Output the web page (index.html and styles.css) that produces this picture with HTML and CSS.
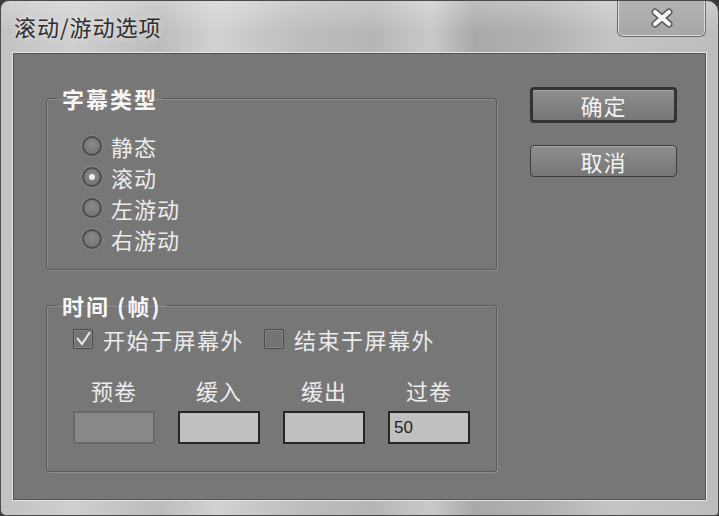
FILE: index.html
```html
<!DOCTYPE html>
<html lang="zh">
<head>
<meta charset="utf-8">
<link rel="stylesheet" href="styles.css">
</head>
<body>
<div class="window">
  <div class="titlebar">
    <span class="title">滚动/游动选项</span>
    <button class="close" type="button">
      <svg width="22" height="20" viewBox="0 0 22 20"><path d="M4 4 L18 16 M18 4 L4 16" stroke="#5a5a5a" stroke-width="7" stroke-linecap="round"/><path d="M4 4 L18 16 M18 4 L4 16" stroke="#f6f6f6" stroke-width="4.2" stroke-linecap="round"/></svg>
    </button>
  </div>
  <div class="client">
    <div class="main">
      <fieldset class="group group-type">
        <legend>字幕类型</legend>
        <div class="radios">
          <label class="radio"><span class="dot"></span>静态</label>
          <label class="radio"><span class="dot on"></span>滚动</label>
          <label class="radio"><span class="dot"></span>左游动</label>
          <label class="radio"><span class="dot"></span>右游动</label>
        </div>
      </fieldset>
      <fieldset class="group group-time">
        <legend>时间 (帧)</legend>
        <div class="checks">
          <label class="check"><span class="box"><svg width="18" height="18" viewBox="0 0 18 18"><path d="M3 8 L8 14 L16 2" fill="none" stroke="#e8e8e8" stroke-width="2"/></svg></span>开始于屏幕外</label>
          <label class="check"><span class="box"></span>结束于屏幕外</label>
        </div>
        <div class="fields">
          <div class="field"><span class="flabel">预卷</span><span class="input disabled"></span></div>
          <div class="field"><span class="flabel">缓入</span><span class="input"></span></div>
          <div class="field"><span class="flabel">缓出</span><span class="input"></span></div>
          <div class="field"><span class="flabel">过卷</span><span class="input">50</span></div>
        </div>
      </fieldset>
    </div>
    <div class="side">
      <button class="btn default" type="button">确定</button>
      <button class="btn" type="button">取消</button>
    </div>
  </div>
  <div class="bottom"></div>
</div>
</body>
</html>
```
FILE: styles.css
```css
html, body {
  margin: 0;
  padding: 0;
  background: #3a3a3a;
}
body {
  width: 719px;
  height: 516px;
  overflow: hidden;
  font-family: "Noto Sans CJK SC", "Noto Sans", sans-serif;
}
.window {
  width: 719px;
  height: 516px;
  box-sizing: border-box;
  border: 1px solid #4a4a4a;
  border-radius: 9px 12px 4px 6px;
  background:
    linear-gradient(90deg, #c2c2c2 0%, #cfcfcf 10%, #bcbcbc 22%, #d2d2d2 30%, #bdbdbd 42%, #b6b6b6 52%, #c9c9c9 60%, #a9a9a9 66%, #b0b0b0 75%, #c4c4c4 85%, #bdbdbd 100%);
  display: flex;
  flex-direction: column;
  overflow: hidden;
}
.titlebar {
  height: 52px;
  display: flex;
  align-items: flex-start;
  justify-content: space-between;
  padding: 0 12px 0 13px;
  background: linear-gradient(180deg, rgba(255,255,255,0.25), rgba(255,255,255,0) 60%);
}
.title {
  margin-top: 9px;
  font-size: 22px;
  line-height: 32px;
  color: #2e2e2e;
  letter-spacing: 1px;
  text-shadow: 0 0 6px rgba(255,255,255,0.7);
}
.close {
  width: 89px;
  height: 37px;
  margin-top: -1px;
  border: 1px solid #6c6c6c;
  border-top: none;
  border-radius: 0 0 6px 6px;
  box-shadow: inset 0 0 0 1px #dcdcdc;
  background: linear-gradient(180deg, #b4b4b4, #a6a6a6);
  display: flex;
  align-items: center;
  justify-content: center;
  padding: 0;
}
.client {
  flex: 1;
  margin: 0 12px 0 12px;
  border: 1px solid #555;
  box-shadow: 0 0 0 1px #e4e4e4;
  background: #777777;
  display: flex;
  padding: 31px 0 0 32px;
  gap: 33px;
}
.main {
  width: 451px;
  display: flex;
  flex-direction: column;
  gap: 22px;
}
.group {
  margin: 0;
  padding: 0;
  border: 1px solid #5a5a5a;
  border-radius: 3px;
  box-shadow: 1px 1px 0 #8c8c8c, inset 1px 1px 0 #8c8c8c;
  min-width: 0;
  box-sizing: border-box;
}
.group legend {
  margin-left: 10px;
  padding: 0 4px 0 5px;
  font-size: 22px;
  font-weight: bold;
  color: #f6f6f6;
  line-height: 26px;
  letter-spacing: 2px;
}
.group-type {
  height: 185px;
}
.radios {
  display: flex;
  flex-direction: column;
  gap: 7px;
  padding: 23px 0 0 35px;
}
.radio {
  display: flex;
  align-items: center;
  gap: 9px;
  height: 24px;
  font-size: 22px;
  color: #ececec;
  letter-spacing: 1px;
}
.dot {
  width: 16px;
  height: 16px;
  border-radius: 50%;
  border: 2px solid #4c4c4c;
  background: radial-gradient(circle at 50% 40%, #8a8a8a, #6e6e6e);
  box-shadow: 0 0 0 1px #868686;
  display: flex;
  align-items: center;
  justify-content: center;
}
.dot.on::after {
  content: "";
  width: 6px;
  height: 6px;
  border-radius: 50%;
  background: #eeeeee;
}
.group-time {
  height: 180px;
}
.checks {
  display: flex;
  gap: 20px;
  padding: 9px 0 0 26px;
}
.check {
  display: flex;
  align-items: center;
  gap: 10px;
  font-size: 22px;
  color: #ececec;
  height: 24px;
  letter-spacing: 1.5px;
}
.box {
  width: 18px;
  height: 18px;
  border: 1px solid #4a4a4a;
  border-radius: 2px;
  background: #747474;
  box-shadow: inset 0 0 0 1px #858585;
  display: flex;
  align-items: center;
  justify-content: center;
}
.fields {
  display: flex;
  gap: 23px;
  padding: 26px 0 0 26px;
}
.field {
  width: 82px;
  display: flex;
  flex-direction: column;
  align-items: center;
  gap: 8px;
}
.flabel {
  font-size: 22px;
  color: #ececec;
  line-height: 26px;
  letter-spacing: 1px;
}
.input {
  width: 82px;
  height: 33px;
  box-sizing: border-box;
  border: 2px solid #262626;
  background: #c0c0c0;
  color: #222;
  font-family: "Liberation Sans", sans-serif;
  font-size: 17px;
  line-height: 29px;
  padding-left: 4px;
}
.input.disabled {
  border: 2px solid #696969;
  background: #888888;
}
.side {
  display: flex;
  flex-direction: column;
  gap: 22px;
  width: 147px;
  padding-top: 2px;
}
.btn {
  width: 147px;
  height: 32px;
  box-sizing: border-box;
  border: 1px solid #3c3c3c;
  border-radius: 4px;
  background: linear-gradient(180deg, #8e8e8e, #767676);
  box-shadow: inset 0 1px 0 #a6a6a6;
  font-family: "Noto Sans CJK SC", "Noto Sans", sans-serif;
  font-size: 22px;
  color: #f2f2f2;
  padding: 0;
  line-height: 28px;
  letter-spacing: 1px;
}
.btn.default {
  border: 3px solid #333;
  height: 36px;
}
.bottom {
  height: 15px;
}
```
